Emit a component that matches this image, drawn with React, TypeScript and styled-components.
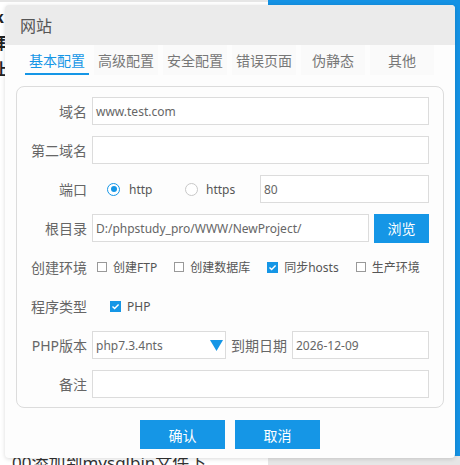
import styled, { createGlobalStyle } from "styled-components";

const GlobalStyle = createGlobalStyle`
  html, body {
    margin: 0;
    padding: 0;
    background: #ffffff;
  }
  * {
    box-sizing: border-box;
  }
`;

const FONT = `"Noto Sans", "Noto Sans CJK SC", sans-serif`;
const BLUE = "#1596e6";

/* ---------- page behind the dialog ---------- */

const Page = styled.div`
  position: relative;
  width: 460px;
  height: 465px;
  overflow: hidden;
  font-family: ${FONT};
  display: grid;
  grid-template-columns: 268px 1fr;
  grid-template-rows: 456px 1fr;
`;

const BackLeft = styled.div`
  background: #ffffff;
  border-top: 2px solid #e6e6e6;
  padding: 4px 0 0 0;
  display: flex;
  flex-direction: column;
  gap: 4px;
  font-size: 16px;
  line-height: 22px;
  font-weight: 700;
  color: #222;
  margin-left: -10px;
`;

const BackRight = styled.div`
  background: #1492e4;
`;

const BackBottom = styled.div`
  background: #ffffff;
  font-size: 17px;
  color: #333;
  padding: 0 0 0 12px;
  line-height: 26px;
  margin-top: -6px;
  white-space: nowrap;
`;

const BackCorner = styled.div`
  background: #e6e6e6;
`;

/* ---------- dialog ---------- */

const Dialog = styled.div`
  position: absolute;
  left: 5px;
  top: 5px;
  width: 450px;
  height: 453px;
  background: #fdfdfd;
  border-radius: 4px;
  box-shadow: 0 1px 4px rgba(0, 0, 0, 0.15);
  display: flex;
  flex-direction: column;
  overflow: hidden;
`;

const TitleBar = styled.div`
  height: 40px;
  background: #ebebeb;
  display: flex;
  align-items: center;
  padding-left: 15px;
  font-size: 16px;
  color: #555;
`;

const Tabs = styled.div`
  display: flex;
  gap: 5px;
  padding-left: 20px;
  height: 30px;
`;

const Tab = styled.div<{ active?: boolean }>`
  width: 64px;
  display: flex;
  align-items: center;
  justify-content: center;
  font-size: 14px;
  color: ${({ active }) => (active ? BLUE : "#777")};
  border-bottom: 2px solid ${({ active }) => (active ? BLUE : "transparent")};
  background: ${({ active }) => (active ? "transparent" : "#fafafa")};
  padding-top: 2px;
`;

const Panel = styled.div`
  margin: 11px 11px 0 11px;
  border: 1px solid #dcdcdc;
  border-radius: 8px;
  padding: 10px 14px 9px 0;
  display: flex;
  flex-direction: column;
  gap: 11px;
`;

const Row = styled.div`
  display: flex;
  align-items: center;
  height: 28px;
  gap: 5px;
`;

const Label = styled.div`
  width: 70px;
  flex: none;
  text-align: right;
  font-size: 14px;
  color: #666;
`;

const Input = styled.div<{ w?: number }>`
  height: 28px;
  border: 1px solid #dcdcdc;
  background: #fff;
  display: flex;
  align-items: center;
  padding-left: 3px;
  font-size: 12px;
  color: #666;
  white-space: nowrap;
  ${({ w }) => (w ? `width: ${w}px; flex: none;` : "flex: 1;")}
`;

const BrowseButton = styled.div`
  width: 55px;
  height: 29px;
  background: ${BLUE};
  color: #fff;
  font-size: 14px;
  display: flex;
  align-items: center;
  justify-content: center;
`;

const Options = styled.div<{ pad: number; gap: number }>`
  display: flex;
  align-items: center;
  padding-left: ${({ pad }) => pad}px;
  gap: ${({ gap }) => gap}px;
`;

const Option = styled.label<{ w?: number; space?: number }>`
  display: flex;
  align-items: center;
  flex: none;
  white-space: nowrap;
  gap: ${({ space }) => space ?? 6}px;
  font-size: 12px;
  color: #555;
  ${({ w }) => (w ? `width: ${w}px;` : "")}
`;

const Radio = styled.span<{ checked?: boolean }>`
  width: 13px;
  height: 13px;
  border-radius: 50%;
  border: 1px solid ${({ checked }) => (checked ? BLUE : "#c8c8c8")};
  background: #fff;
  display: flex;
  align-items: center;
  justify-content: center;
  &::after {
    content: "";
    width: 6px;
    height: 6px;
    border-radius: 50%;
    background: ${({ checked }) => (checked ? BLUE : "transparent")};
  }
`;

const Check = styled.span<{ checked?: boolean }>`
  width: ${({ checked }) => (checked ? 11 : 10)}px;
  height: ${({ checked }) => (checked ? 11 : 10)}px;
  border: 1px solid ${({ checked }) => (checked ? BLUE : "#999")};
  background: ${({ checked }) => (checked ? BLUE : "#fff")};
  display: flex;
  align-items: center;
  justify-content: center;
`;

const InlineLabel = styled.div`
  font-size: 14px;
  color: #666;
  flex: none;
`;

const Select = styled(Input)`
  justify-content: space-between;
  padding-right: 2px;
`;

const Footer = styled.div`
  display: flex;
  justify-content: center;
  gap: 10px;
  margin-top: 12px;
`;

const FooterButton = styled.div`
  width: 85px;
  height: 29px;
  background: ${BLUE};
  color: #fff;
  font-size: 14px;
  display: flex;
  align-items: center;
  justify-content: center;
`;

function CheckMark() {
  return (
    <svg width="9" height="9" viewBox="0 0 9 9">
      <path d="M1.5 4.6 L3.6 6.6 L7.6 2.4" fill="none" stroke="#fff" strokeWidth="1.4" />
    </svg>
  );
}

function Box({ checked, children }: { checked?: boolean; children: string }) {
  return (
    <Option>
      <Check checked={checked}>{checked && <CheckMark />}</Check>
      {children}
    </Option>
  );
}

export default function App() {
  return (
    <>
      <GlobalStyle />
      <Page>
        <BackLeft>
          <span>ж</span>
          <span>拜</span>
          <span>址</span>
        </BackLeft>
        <BackRight />
        <BackBottom>00添加到mysqlbin文件下</BackBottom>
        <BackCorner />

        <Dialog>
          <TitleBar>网站</TitleBar>
          <Tabs>
            <Tab active>基本配置</Tab>
            <Tab>高级配置</Tab>
            <Tab>安全配置</Tab>
            <Tab>错误页面</Tab>
            <Tab>伪静态</Tab>
            <Tab>其他</Tab>
          </Tabs>

          <Panel>
            <Row>
              <Label>域名</Label>
              <Input>www.test.com</Input>
            </Row>
            <Row>
              <Label>第二域名</Label>
              <Input />
            </Row>
            <Row>
              <Label>端口</Label>
              <Options pad={15} gap={0}>
                <Option w={78} space={9}>
                  <Radio checked />
                  http
                </Option>
                <Option w={70} space={8}>
                  <Radio />
                  https
                </Option>
              </Options>
              <Input w={169}>80</Input>
            </Row>
            <Row>
              <Label>根目录</Label>
              <Input>D:/phpstudy_pro/WWW/NewProject/</Input>
              <BrowseButton>浏览</BrowseButton>
            </Row>
            <Row>
              <Label>创建环境</Label>
              <Options pad={5} gap={17}>
                <Box>创建FTP</Box>
                <Box>创建数据库</Box>
                <Box checked>同步hosts</Box>
                <Box>生产环境</Box>
              </Options>
            </Row>
            <Row>
              <Label>程序类型</Label>
              <Options pad={18} gap={0}>
                <Box checked>PHP</Box>
              </Options>
            </Row>
            <Row>
              <Label>PHP版本</Label>
              <Select w={134}>
                php7.3.4nts
                <svg width="13" height="11" viewBox="0 0 13 11">
                  <path d="M0 0 H13 L6.5 11 Z" fill={BLUE} />
                </svg>
              </Select>
              <InlineLabel>到期日期</InlineLabel>
              <Input>2026-12-09</Input>
            </Row>
            <Row>
              <Label>备注</Label>
              <Input />
            </Row>
          </Panel>

          <Footer>
            <FooterButton>确认</FooterButton>
            <FooterButton>取消</FooterButton>
          </Footer>
        </Dialog>
      </Page>
    </>
  );
}
